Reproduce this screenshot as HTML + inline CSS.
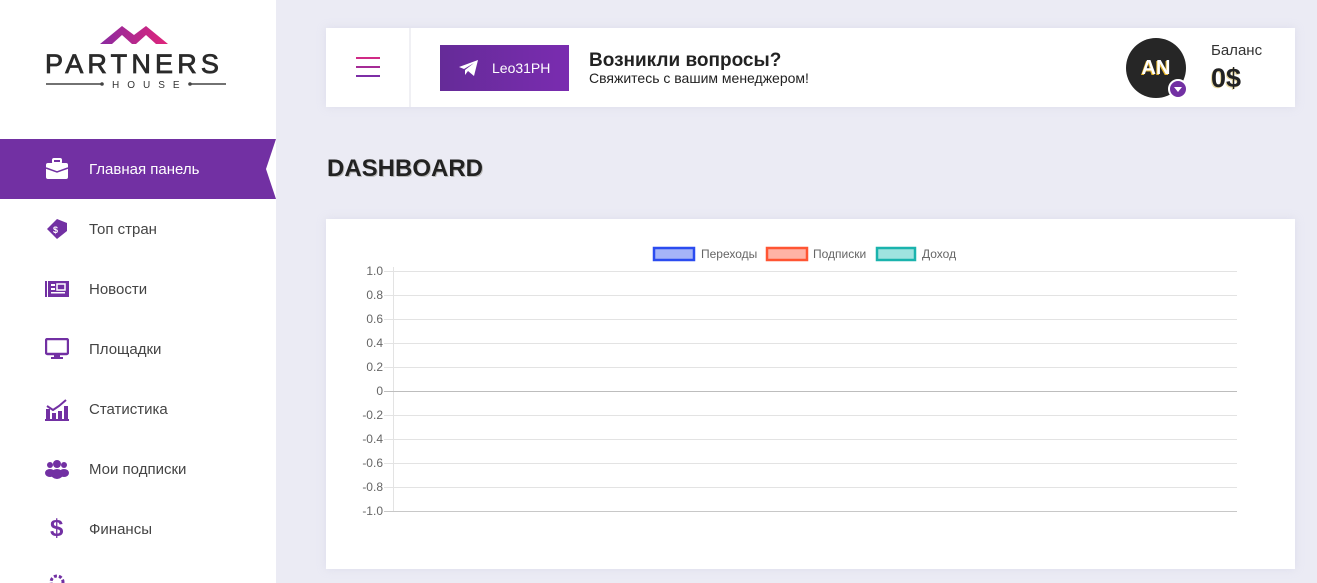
<!DOCTYPE html>
<html><head><meta charset="utf-8"><style>
*{margin:0;padding:0;box-sizing:border-box}
body{width:1317px;height:583px;overflow:hidden;background:#ebebf4;font-family:"Liberation Sans",Arial,sans-serif;position:relative}
.side{position:absolute;left:0;top:0;width:276px;height:583px;background:#fff}
.item{position:absolute;left:0;width:276px;height:60px;display:flex;align-items:center;font-size:15px;color:#444}
.item svg{position:absolute;left:45px}
.item span{position:absolute;left:89px}
.active{background:#7230a3;color:#fff;clip-path:polygon(0 0,276px 0,266px 30px,276px 60px,0 60px)}
.card{position:absolute;background:#fff;box-shadow:0 0 8px rgba(200,200,225,.4)}
</style></head><body>
<div class="side">
  <svg style="position:absolute;left:40px;top:20px" width="200" height="80">
    <defs><linearGradient id="rg" x1="0" x2="1"><stop offset="0" stop-color="#8a2aa0"/><stop offset="1" stop-color="#e0257a"/></linearGradient></defs>
    <path d="M60 24 L82 6 L94 15 L106 6 L128 24 L116 24 L106 15 L96 24 L92 24 L82 15 L72 24 Z" fill="url(#rg)"/>
    <text x="5" y="53" font-family="Liberation Sans" font-size="27" letter-spacing="4.2" fill="#2a2a2a" stroke="#2a2a2a" stroke-width="0.8">PARTNERS</text>
    <line x1="6" y1="64" x2="62" y2="64" stroke="#444" stroke-width="1.5"/>
    <circle cx="62" cy="64" r="1.8" fill="#444"/>
    <text x="72" y="68" font-family="Liberation Sans" font-size="10" letter-spacing="8" fill="#333">HOUSE</text>
    <circle cx="150" cy="64" r="1.8" fill="#444"/>
    <line x1="150" y1="64" x2="186" y2="64" stroke="#444" stroke-width="1.5"/>
  </svg>
  <div class="item active" style="top:139px"><svg width="24" height="22" viewBox="0 0 24 22"><rect x="8" y="1" width="8" height="4" rx="1" fill="none" stroke="#fff" stroke-width="2"/><rect x="1" y="5" width="22" height="16" rx="2" fill="#fff"/><path d="M1 10 L12 14 L23 10" stroke="#7230a3" stroke-width="1.5" fill="none"/></svg><span>Главная панель</span></div>
  <div class="item" style="top:199px"><svg width="24" height="24" viewBox="0 0 24 24"><path d="M2 12 L12 2 L22 6 L22 14 L12 22 Z" fill="#7230a3"/><text x="8" y="16" font-size="9" fill="#fff" font-weight="bold">$</text></svg><span>Топ стран</span></div>
  <div class="item" style="top:259px"><svg width="24" height="20" viewBox="0 0 24 20"><rect x="0" y="2" width="2" height="16" fill="#7230a3"/><rect x="3" y="2" width="21" height="16" fill="#7230a3"/><rect x="6" y="5" width="4" height="2" fill="#fff"/><rect x="6" y="9" width="4" height="2" fill="#fff"/><rect x="12" y="5" width="8" height="6" fill="none" stroke="#fff" stroke-width="1.5"/><rect x="6" y="13" width="14" height="1.5" fill="#fff"/></svg><span>Новости</span></div>
  <div class="item" style="top:319px"><svg width="24" height="22" viewBox="0 0 24 22"><rect x="1" y="1" width="22" height="15" rx="1.5" fill="none" stroke="#7230a3" stroke-width="2.4"/><rect x="9" y="16" width="6" height="3" fill="#7230a3"/><rect x="6" y="19" width="12" height="2" fill="#7230a3"/></svg><span>Площадки</span></div>
  <div class="item" style="top:379px"><svg width="24" height="24" viewBox="0 0 24 24"><rect x="1" y="12" width="4" height="10" fill="#7230a3"/><rect x="7" y="16" width="4" height="6" fill="#7230a3"/><rect x="13" y="14" width="4" height="8" fill="#7230a3"/><rect x="19" y="9" width="4" height="13" fill="#7230a3"/><path d="M2 9 L8 13 L14 9 L21 3" stroke="#7230a3" stroke-width="2" fill="none"/><rect x="0" y="22" width="24" height="2" fill="#7230a3"/></svg><span>Статистика</span></div>
  <div class="item" style="top:439px"><svg width="24" height="20" viewBox="0 0 24 20"><circle cx="5" cy="6" r="3" fill="#7230a3"/><circle cx="19" cy="6" r="3" fill="#7230a3"/><circle cx="12" cy="5" r="4" fill="#7230a3"/><ellipse cx="5" cy="14" rx="5" ry="4" fill="#7230a3"/><ellipse cx="19" cy="14" rx="5" ry="4" fill="#7230a3"/><ellipse cx="12" cy="15" rx="6" ry="5" fill="#7230a3"/></svg><span>Мои подписки</span></div>
  <div class="item" style="top:499px"><span style="left:50px;color:#7230a3;font-size:24px;font-weight:bold">$</span><span>Финансы</span></div>
  <svg style="position:absolute;left:48px;top:574px" width="18" height="9"><circle cx="9" cy="8" r="6" fill="none" stroke="#7230a3" stroke-width="3" stroke-dasharray="3 2"/></svg>
</div>

<div class="card" style="left:326px;top:28px;width:969px;height:79px">
  <div style="position:absolute;left:30px;top:29px;width:24px">
    <div style="height:2px;background:#d02a86;margin-bottom:7px"></div>
    <div style="height:2px;background:#a52b96;margin-bottom:7px"></div>
    <div style="height:2px;background:#7d2ea6"></div>
  </div>
  <div style="position:absolute;left:83px;top:0;width:2px;height:79px;background:#f0f0f4"></div>
  <div style="position:absolute;left:114px;top:17px;width:129px;height:46px;background:linear-gradient(90deg,#652b98,#7a2cb0);color:#fff;font-size:14px">
    <svg style="position:absolute;left:19px;top:15px" width="19" height="16" viewBox="0 0 19 16"><path d="M0 7 L19 0 L15 16 L9 11 L6 15 L6 10 L15 3 L5 9 Z" fill="#fff"/></svg>
    <span style="position:absolute;left:52px;top:15px">Leo31PH</span>
  </div>
  <div style="position:absolute;left:263px;top:22px;font-size:19px;font-weight:bold;color:#222">Возникли вопросы?</div>
  <div style="position:absolute;left:263px;top:42px;font-size:14px;color:#222">Свяжитесь с вашим менеджером!</div>
  <div style="position:absolute;left:800px;top:10px;width:60px;height:60px;border-radius:50%;background:#262626;color:#fff;font-weight:bold;font-size:20px;text-align:center;line-height:60px;text-shadow:-1px 1px 0 #e8b830">AN</div>
  <div style="position:absolute;left:842px;top:51px;width:20px;height:20px;border-radius:50%;background:#7230a3;border:2px solid #fff"></div>
  <div style="position:absolute;left:848px;top:59px;width:0;height:0;border-left:4px solid transparent;border-right:4px solid transparent;border-top:5px solid #fff"></div>
  <div style="position:absolute;left:885px;top:14px;font-size:15px;color:#333">Баланс</div>
  <div style="position:absolute;left:885px;top:35px;font-size:27px;font-weight:bold;color:#222;text-shadow:-1px 1px 0 #e8d8a0">0$</div>
</div>

<div style="position:absolute;left:327px;top:155px;font-size:24px;font-weight:bold;color:#222;text-shadow:1px 1px 0 #bbb">DASHBOARD</div>

<div class="card" style="left:326px;top:219px;width:969px;height:350px">
  <svg width="969" height="350" style="position:absolute;left:0;top:0" font-family="Liberation Sans" font-size="12" fill="#666">
    <rect x="328" y="29" width="40" height="12" fill="#a5b4f8" stroke="#2b4cf0" stroke-width="2.5"/>
    <text x="375" y="39">Переходы</text>
    <rect x="441" y="29" width="40" height="12" fill="#ffb3a6" stroke="#ff5533" stroke-width="2.5"/>
    <text x="487" y="39">Подписки</text>
    <rect x="551" y="29" width="38" height="12" fill="#9fe3df" stroke="#1ab3ad" stroke-width="2.5"/>
    <text x="596" y="39">Доход</text>
    <line x1="67.5" y1="48" x2="67.5" y2="292" stroke="#e3e3e3"/>
    <g stroke="#e3e3e3">
      <line x1="58" y1="52.5" x2="911" y2="52.5"/><line x1="58" y1="76.5" x2="911" y2="76.5"/>
      <line x1="58" y1="100.5" x2="911" y2="100.5"/><line x1="58" y1="124.5" x2="911" y2="124.5"/>
      <line x1="58" y1="148.5" x2="911" y2="148.5"/>
      <line x1="58" y1="196.5" x2="911" y2="196.5"/><line x1="58" y1="220.5" x2="911" y2="220.5"/>
      <line x1="58" y1="244.5" x2="911" y2="244.5"/><line x1="58" y1="268.5" x2="911" y2="268.5"/>
    </g>
    <line x1="58" y1="172.5" x2="911" y2="172.5" stroke="#bdbdbd"/>
    <line x1="58" y1="292.5" x2="911" y2="292.5" stroke="#c8c8c8"/>
    <g text-anchor="end">
      <text x="57" y="56">1.0</text><text x="57" y="80">0.8</text><text x="57" y="104">0.6</text>
      <text x="57" y="128">0.4</text><text x="57" y="152">0.2</text><text x="57" y="176">0</text>
      <text x="57" y="200">-0.2</text><text x="57" y="224">-0.4</text><text x="57" y="248">-0.6</text>
      <text x="57" y="272">-0.8</text><text x="57" y="296">-1.0</text>
    </g>
  </svg>
</div>
</body></html>
